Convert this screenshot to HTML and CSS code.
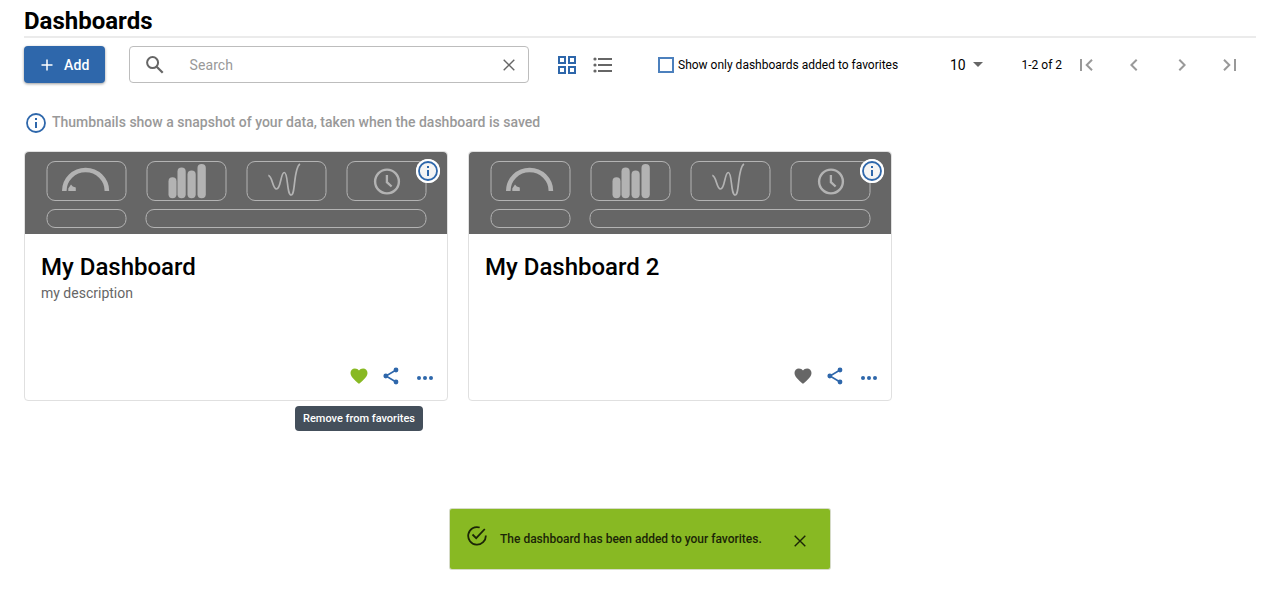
FILE: index.html
```html
<!DOCTYPE html>
<html lang="en">
<head>
<meta charset="utf-8">
<title>Dashboards</title>
<link rel="stylesheet" href="styles.css">
</head>
<body>
<svg class="defs" width="0" height="0" aria-hidden="true">
  <defs>
    <symbol id="thumb" viewBox="0 0 422 82">
      <g fill="none" stroke="#b3b3b3" stroke-width="1">
        <rect x="22" y="9.5" width="79" height="39" rx="8"/>
        <rect x="122" y="9.5" width="79" height="39" rx="8"/>
        <rect x="222" y="9.5" width="79" height="39" rx="8"/>
        <rect x="322" y="9.5" width="79" height="39" rx="8"/>
        <rect x="22" y="57.5" width="79" height="18" rx="8"/>
        <rect x="121" y="57.5" width="280" height="18" rx="8"/>
      </g>
      <path d="M39.3 39a21.3 21 0 0 1 42.6 0" fill="none" stroke="#b3b3b3" stroke-width="4.6"/>
      <path d="M43.3 39v-2.500l2.700-4 1.800 1.900 3 1.200v3.400z" fill="#b3b3b3"/>
      <g fill="#b3b3b3">
        <rect x="143.500" y="25.300" width="8" height="21" rx="4"/>
        <rect x="152.500" y="15.600" width="8.200" height="30.700" rx="4.100"/>
        <rect x="162.500" y="18.600" width="8.200" height="27.700" rx="4.100"/>
        <rect x="172.500" y="12" width="8.300" height="34.300" rx="4.100"/>
      </g>
      <path d="M243.300 23.300C247.500 24 247.500 37 251.500 37C256 37 255.500 20.500 259.300 20.500C263.300 20.500 261.500 43 266.300 43C270.500 43 268.500 15.500 275 12" fill="none" stroke="#b3b3b3" stroke-width="1.700"/>
      <circle cx="362" cy="29.500" r="11.900" fill="none" stroke="#b3b3b3" stroke-width="2.400"/>
      <path d="M361.900 23v7.200l4.700 4.300" fill="none" stroke="#b3b3b3" stroke-width="2.300"/>
    </symbol>
    <symbol id="info" viewBox="0 0 20 20">
      <circle cx="10" cy="10" r="9" fill="none" stroke="currentColor" stroke-width="1.800"/>
      <path d="M9 5h2v2H9zM9 9h2v6H9z" fill="currentColor"/>
    </symbol>
    <symbol id="heart" viewBox="0 0 18 16">
      <path d="M9 15.800C7.500 14.200 .5 9.500 .5 4.900.5 2.300 2.400.4 4.900.4c1.700 0 3.300.8 4.100 2.200C9.800 1.200 11.400.4 13.100.4c2.500 0 4.400 1.900 4.400 4.500 0 4.600-7 9.300-8.500 10.900z" fill="currentColor"/>
    </symbol>
    <symbol id="share" viewBox="0 0 16 18">
      <path d="M13 3 3 9l10 6" fill="none" stroke="currentColor" stroke-width="1.600"/>
      <circle cx="13" cy="3" r="2.400" fill="currentColor"/>
      <circle cx="2.800" cy="9" r="2.400" fill="currentColor"/>
      <circle cx="13" cy="15" r="2.400" fill="currentColor"/>
    </symbol>
    <symbol id="dots" viewBox="0 0 16 4">
      <circle cx="2" cy="2" r="2" fill="currentColor"/>
      <circle cx="8" cy="2" r="2" fill="currentColor"/>
      <circle cx="14" cy="2" r="2" fill="currentColor"/>
    </symbol>
    <symbol id="close" viewBox="0 0 12 12">
      <path d="M.7.7l10.600 10.600M11.300.7.7 11.300" fill="none" stroke="currentColor" stroke-width="1.400"/>
    </symbol>
  </defs>
</svg>

<main class="page">
  <header class="page-header"><h1 class="title">Dashboards</h1></header>

  <div class="toolbar">
    <button class="add-button" type="button">
      <svg width="12" height="12" viewBox="0 0 12 12"><path d="M6 .5v11M.5 6h11" stroke="currentColor" stroke-width="1.500"/></svg>
      <span>Add</span>
    </button>
    <div class="search">
      <svg width="18" height="18" viewBox="0 0 18 18" fill="none" stroke="currentColor"><circle cx="6.600" cy="6.600" r="5.500" stroke-width="2"/><path d="M10.700 10.700l6 6" stroke-width="2.200"/></svg>
      <span class="search-text">Search</span>
      <svg width="12" height="12"><use href="#close"/></svg>
    </div>
    <div class="views">
      <svg class="view-grid" width="18" height="18" viewBox="0 0 18 18" fill="none" stroke="currentColor" stroke-width="2"><path d="M1 1h6v6H1zM11 1h6v6h-6zM1 11h6v6H1zM11 11h6v6h-6z"/></svg>
      <svg class="view-list" width="19" height="16" viewBox="0 0 19 16" fill="currentColor"><path d="M5 1h14v2H5zM5 7h14v2H5zM5 13h14v2H5z"/><circle cx="2" cy="2" r="1.600"/><circle cx="2" cy="8" r="1.600"/><circle cx="2" cy="14" r="1.600"/></svg>
    </div>
    <label class="favorites"><span class="checkbox"></span><span class="favorites-text">Show only dashboards added to favorites</span></label>
    <div class="page-size"><span class="page-size-text">10</span><svg width="10" height="5" viewBox="0 0 10 5"><path d="M0 0h10L5 5z" fill="currentColor"/></svg></div>
    <span class="range">1-2 of 2</span>
    <nav class="pager">
      <svg width="13" height="12" viewBox="0 0 13 12"><path d="M1 0v12M12 .7 6.700 6l5.300 5.300"/></svg>
      <svg class="pager-prev" width="8" height="12" viewBox="0 0 8 12"><path d="M6.700.7 1.400 6l5.300 5.300"/></svg>
      <svg class="pager-next" width="8" height="12" viewBox="0 0 8 12"><path d="M1.300.7 6.600 6l-5.300 5.300"/></svg>
      <svg class="pager-last" width="13" height="12" viewBox="0 0 13 12"><path d="M12 0v12M1 .7 6.300 6 1 11.300"/></svg>
    </nav>
  </div>

  <p class="hint"><svg width="20" height="20"><use href="#info"/></svg><span class="hint-text">Thumbnails show a snapshot of your data, taken when the dashboard is saved</span></p>

  <section class="cards">
    <article class="card">
      <div class="thumb"><svg width="422" height="82"><use href="#thumb"/></svg><span class="badge"><svg width="20" height="20"><use href="#info"/></svg></span></div>
      <div class="card-body">
        <h2 class="card-title">My Dashboard</h2>
        <p class="card-text">my description</p>
        <div class="actions">
          <span class="favorite favorite-on"><svg width="18" height="16"><use href="#heart"/></svg><span class="tooltip">Remove from favorites</span></span>
          <svg class="share" width="16" height="18"><use href="#share"/></svg>
          <svg class="more" width="16" height="4"><use href="#dots"/></svg>
        </div>
      </div>
    </article>
    <article class="card">
      <div class="thumb"><svg width="422" height="82"><use href="#thumb"/></svg><span class="badge"><svg width="20" height="20"><use href="#info"/></svg></span></div>
      <div class="card-body">
        <h2 class="card-title">My Dashboard 2</h2>
        <div class="actions">
          <span class="favorite"><svg width="18" height="16"><use href="#heart"/></svg></span>
          <svg class="share" width="16" height="18"><use href="#share"/></svg>
          <svg class="more" width="16" height="4"><use href="#dots"/></svg>
        </div>
      </div>
    </article>
  </section>
</main>

<div class="toast" role="status">
  <svg class="toast-check" width="20" height="20" viewBox="0 0 20 20" fill="none" stroke="currentColor" stroke-width="1.800"><path d="M12.700 1.500A8.800 8.800 0 1 0 18.800 9.500"/><path d="M5.500 8.500l3.700 3.700L17.800 3"/></svg>
  <span class="toast-text">The dashboard has been added to your favorites.</span>
  <svg class="toast-close" width="12" height="12"><use href="#close"/></svg>
</div>
</body>
</html>
```
FILE: styles.css
```css
* { box-sizing: border-box; }
body { margin: 0; height: 590px; overflow: hidden; background: #fff; color: #000; font-family: Roboto, sans-serif; font-size: 14px; }
svg { display: block; flex: none; }
h1, h2, p { margin: 0; }
.defs { position: absolute; }
.page { padding: 0 24px; }
.page-header { height: 38px; padding-top: 7px; border-bottom: 2px solid #ebebeb; }
.title { font-size: 24px; line-height: 28px; font-weight: 700; }
.toolbar { display: flex; align-items: center; height: 37px; margin-top: 8px; white-space: nowrap; }
.add-button { display: flex; align-items: center; gap: 11px; width: 81px; height: 37px; padding: 0 0 0 17px; border: 0; border-radius: 4px; background: #2e67ab; color: #fff; font: 500 14px/20px Roboto, sans-serif; letter-spacing: .2px; box-shadow: 0 1px 3px rgba(0,0,0,.4); }
.search { display: flex; align-items: center; width: 400px; height: 37px; margin-left: 24px; padding: 0 13px 0 16px; border: 1px solid #bdbdbd; border-radius: 4px; color: #666; }
.search-text { flex: 1; margin-left: 25.5px; color: #999; letter-spacing: .1px; }
.views { display: flex; align-items: center; gap: 17px; margin-left: 29px; }
.view-grid { color: #2e67ab; }
.view-list { color: #666; }
.favorites { display: flex; align-items: center; gap: 4px; width: 246px; margin-left: 46px; font-size: 12px; }
.checkbox { width: 16px; height: 16px; border: 2px solid #4c80bd; }
.page-size { display: flex; align-items: center; gap: 7px; width: 33px; margin-left: 46px; }
.page-size svg { color: #666; }
.range { width: 43.5px; margin-left: 38.5px; font-size: 12px; }
.pager { display: flex; align-items: center; margin-left: 15px; }
.pager path { fill: none; stroke: #999; stroke-width: 2; }
.pager-prev, .pager-last { margin-left: 37px; }
.pager-next { margin-left: 40px; }
.hint { display: flex; align-items: center; gap: 6px; height: 20px; margin-top: 30px; padding-left: 2px; color: #2e67ab; }
.hint-text { padding-bottom: 2px; color: #999; font-weight: 500; letter-spacing: .005px; }
.cards { display: flex; gap: 20px; margin-top: 18px; }
.card { width: 424px; height: 250px; border: 1px solid #e0e0e0; border-radius: 4px; background: #fff; }
.thumb { position: relative; height: 82px; border-radius: 4px 4px 0 0; background: #666; }
.badge { position: absolute; top: 7px; right: 7px; padding: 2px; border-radius: 50%; background: #f4f4f4; color: #2e67ab; box-shadow: inset 0 0 0 2px #fff; }
.card-body { display: flex; flex-direction: column; height: 166px; padding: 18px 14px 15px 16px; }
.card-title { font-size: 24px; line-height: 30px; font-weight: 500; }
.card-text { margin-top: 3px; line-height: 16px; color: #666; }
.actions { display: flex; align-items: center; height: 18px; margin-top: auto; justify-content: flex-end; color: #2e67ab; }
.favorite { position: relative; color: #666; }
.favorite-on { color: #88b923; }
.share { margin-left: 15px; }
.more { margin: 3px 0 0 18px; }
.tooltip { position: absolute; top: 38px; left: 50%; width: 128px; height: 25px; transform: translateX(-50%); border-radius: 4px; background: #444f5b; color: #fff; font-size: 11px; font-weight: 500; line-height: 25px; text-align: center; white-space: nowrap; }
.toast { position: absolute; left: 450px; bottom: 21px; display: flex; width: 380px; height: 60px; padding: 0 24px 0 17px; border-radius: 2px; background: #88b923; color: #1b2507; box-shadow: 0 0 0 1px #d6dbc8; }
.toast-check { margin-top: 17px; }
.toast-text { flex: 1; margin-left: 13px; font-size: 12px; font-weight: 500; line-height: 60px; white-space: nowrap; }
.toast-close { margin-top: 26px; }
```
